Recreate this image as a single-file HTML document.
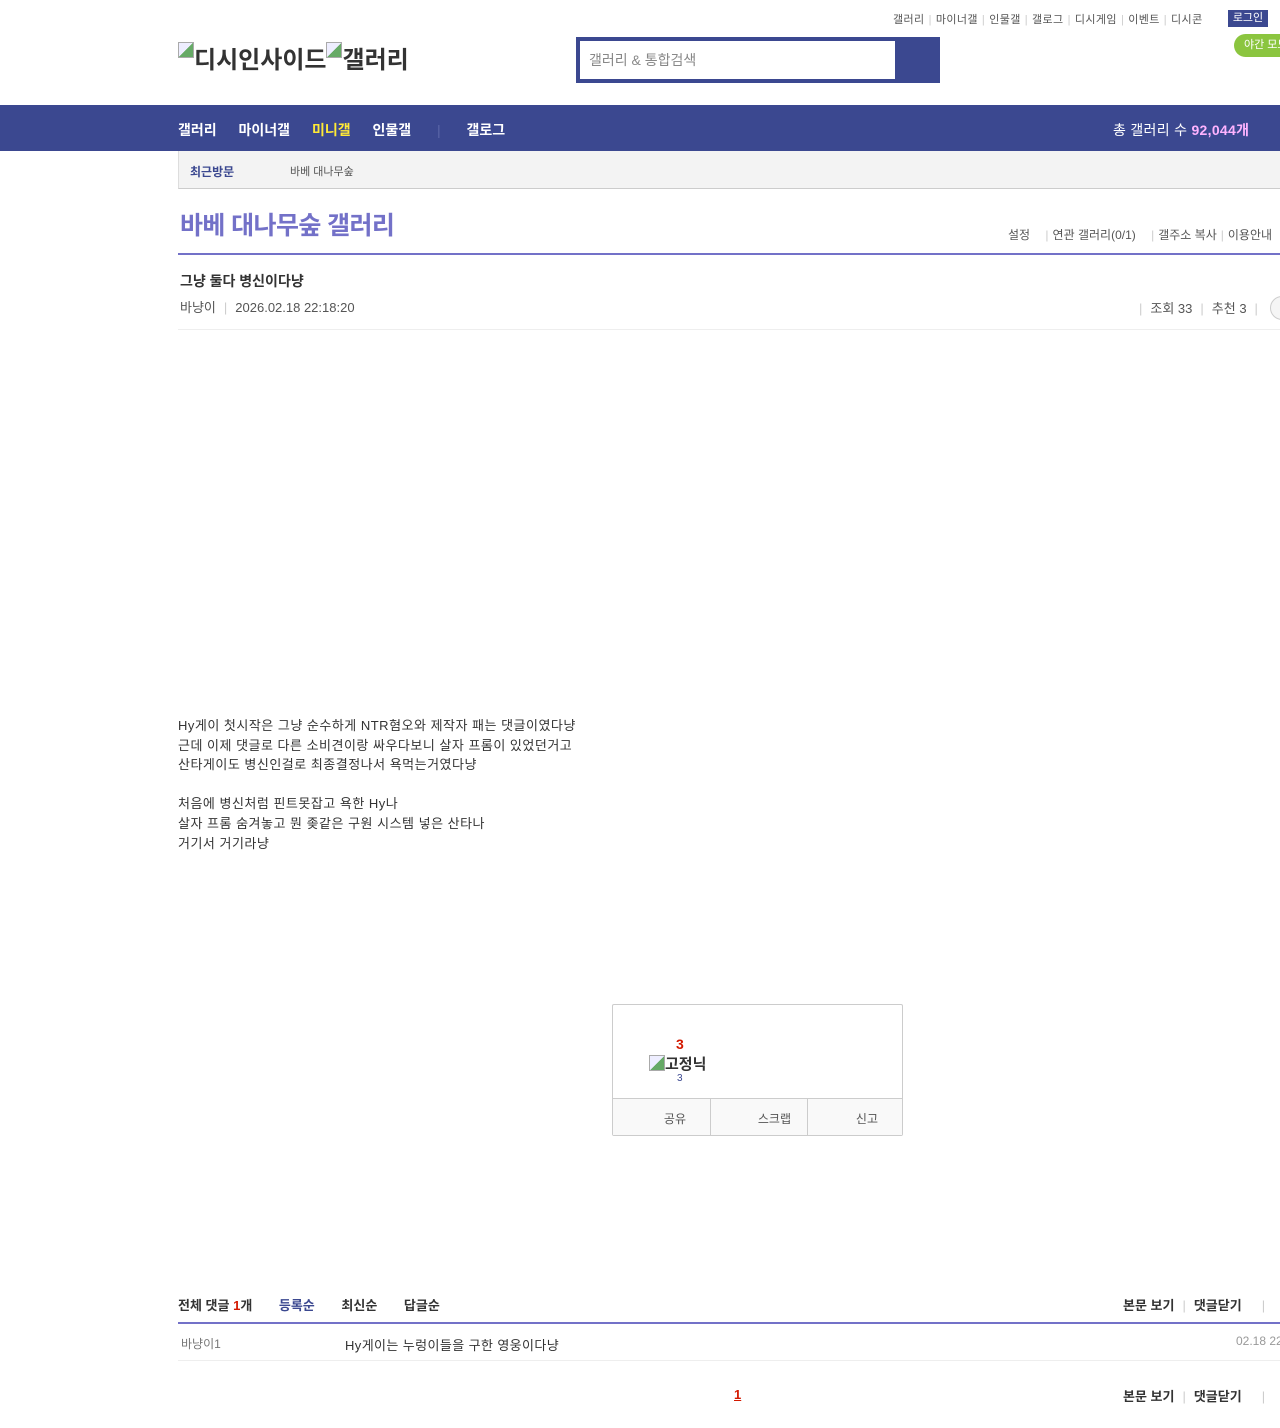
<!DOCTYPE html>
<html><head><meta charset="utf-8"><style>
*{margin:0;padding:0;box-sizing:border-box}
body{width:1280px;height:1428px;overflow:hidden;background:#fff;font-family:"Liberation Sans","Noto Sans CJK KR",sans-serif;color:#333;position:relative}
.a{position:absolute;white-space:nowrap}
.sep{color:#ccc;margin:0 4px}
.ic{display:inline-block;width:16px;height:16px;border:1px solid #aaa;background:linear-gradient(135deg,#eef 50%,#6a6 50%);vertical-align:top;margin-top:2px}
</style></head><body>
<div class="a" style="top:11px;left:893px;font-size:11px;color:#555;letter-spacing:0.4px">갤러리<span class="sep">|</span>마이너갤<span class="sep">|</span>인물갤<span class="sep">|</span>갤로그<span class="sep">|</span>디시게임<span class="sep">|</span>이벤트<span class="sep">|</span>디시콘</div>
<div class="a" style="top:10px;left:1228px;width:40px;height:17px;background:#3b4890;color:#fff;font-size:11px;line-height:17px;text-align:center">로그인</div>
<div class="a" style="top:34px;left:1234px;width:60px;height:23px;background:#8bc53f;border-radius:12px;color:#fff;font-size:11px;line-height:23px;padding-left:10px">야간 모드</div>
<div class="a" style="top:40px;left:178px;font-size:24px;font-weight:bold;color:#333"><span class="ic"></span>디시인사이드<span class="ic"></span>갤러리</div>
<div class="a" style="top:37px;left:576px;width:364px;height:46px;background:#3b4890"></div>
<div class="a" style="top:41px;left:580px;width:315px;height:38px;background:#fff;font-size:14px;color:#888;line-height:38px;padding-left:9px">갤러리 &amp; 통합검색</div>
<div class="a" style="top:105px;left:0;width:1280px;height:46px;background:#3b4890"></div>
<div class="a" style="top:120px;left:178px;font-size:14px;font-weight:bold;color:#fff">갤러리 <span style="margin-left:18px">마이너갤</span> <span style="margin-left:18px;color:#ffea36">미니갤</span> <span style="margin-left:18px">인물갤</span> <span style="margin:0 22px;color:#5b67a8;font-weight:normal">|</span> 갤로그</div>
<div class="a" style="top:120px;left:1113px;font-size:14px;color:#fff;letter-spacing:0.3px">총 갤러리 수 <b style="color:#ffb3ff">92,044개</b></div>
<div class="a" style="top:151px;left:178px;width:1102px;height:38px;background:#f3f3f3;border-left:1px solid #ddd;border-bottom:1px solid #ccc"></div>
<div class="a" style="top:163px;left:190px;font-size:12px;color:#3b4890;font-weight:bold">최근방문</div>
<div class="a" style="top:163px;left:290px;font-size:11px;color:#555">바베 대나무숲</div>
<div class="a" style="top:206px;left:180px;font-size:25px;font-weight:bold;color:#7371c8;letter-spacing:-0.6px">바베 대나무숲 갤러리</div>
<div class="a" style="top:226px;left:1008px;font-size:12px;color:#555">설정 <span class="sep" style="margin-left:12px">|</span>연관 갤러리(0/1) <span class="sep" style="margin-left:12px">|</span>갤주소 복사<span class="sep">|</span>이용안내</div>
<div class="a" style="top:253px;left:178px;width:1102px;height:2px;background:#7371c8"></div>
<div class="a" style="top:271px;left:180px;font-size:14px;font-weight:bold;color:#333">그냥 둘다 병신이다냥</div>
<div class="a" style="top:297px;left:180px;font-size:13px;color:#555">바냥이<span class="sep" style="margin:0 8px">|</span>2026.02.18 22:18:20</div>
<div class="a" style="top:298px;left:1135px;font-size:13px;color:#555"><span class="sep" style="margin-right:8px">|</span>조회 33<span class="sep" style="margin:0 8px">|</span>추천 3<span class="sep" style="margin:0 8px">|</span></div>
<div class="a" style="top:296px;left:1270px;width:24px;height:24px;border:1px solid #ccc;border-radius:12px;background:#f5f5f5"></div>
<div class="a" style="top:329px;left:178px;width:1102px;height:1px;background:#eee"></div>
<div class="a" style="top:716px;left:178px;font-size:13px;line-height:19.6px;color:#333;letter-spacing:0.5px">Hy게이 첫시작은 그냥 순수하게 NTR혐오와 제작자 패는 댓글이였다냥<br>근데 이제 댓글로 다른 소비견이랑 싸우다보니 살자 프롬이 있었던거고<br>산타게이도 병신인걸로 최종결정나서 욕먹는거였다냥<br><br>처음에 병신처럼 핀트못잡고 욕한 Hy나<br>살자 프롬 숨겨놓고 뭔 좆같은 구원 시스템 넣은 산타나<br>거기서 거기라냥</div>
<div class="a" style="top:1004px;left:612px;width:291px;height:132px;border:1px solid #ccc;border-radius:2px"></div>
<div class="a" style="top:1036px;left:676px;font-size:14px;font-weight:bold;color:#d31900">3</div>
<div class="a" style="top:1053px;left:649px;font-size:15px;font-weight:bold;color:#333"><span class="ic"></span>고정닉</div>
<div class="a" style="top:1073px;left:677px;font-size:10px;color:#3b4890">3</div>
<div class="a" style="top:1098px;left:613px;width:289px;height:37px;background:#f9f9f9;border-top:1px solid #ccc;font-size:12px;color:#555;line-height:40px">
<span class="a" style="left:0;width:97px;text-align:right;padding-right:24px">공유</span>
<span class="a" style="left:97px;width:97px;border-left:1px solid #ccc;height:37px;text-align:right;padding-right:16px">스크랩</span>
<span class="a" style="left:194px;width:95px;border-left:1px solid #ccc;height:37px;text-align:right;padding-right:24px">신고</span></div>
<div class="a" style="top:1295px;left:178px;font-size:13px;font-weight:bold;color:#333">전체 댓글 <span style="color:#d31900">1</span>개 <span style="margin-left:23px;color:#3b4890">등록순</span> <span style="margin-left:23px">최신순</span> <span style="margin-left:23px">답글순</span></div>
<div class="a" style="top:1295px;left:1123px;font-size:13px;font-weight:bold;color:#333">본문 보기<span class="sep" style="margin:0 8px;font-weight:normal">|</span>댓글닫기<span class="sep" style="margin-left:20px;font-weight:normal">|</span></div>
<div class="a" style="top:1322px;left:178px;width:1102px;height:2px;background:#7371c8"></div>
<div class="a" style="top:1335px;left:181px;font-size:12px;color:#777">바냥이1</div>
<div class="a" style="top:1335px;left:345px;font-size:13px;color:#333;letter-spacing:0.4px">Hy게이는 누렁이들을 구한 영웅이다냥</div>
<div class="a" style="top:1334px;left:1236px;font-size:12px;color:#999">02.18 22:30:11</div>
<div class="a" style="top:1360px;left:178px;width:1102px;height:1px;background:#eee"></div>
<div class="a" style="top:1387px;left:734px;font-size:13px;font-weight:bold;color:#d31900;text-decoration:underline">1</div>
<div class="a" style="top:1386px;left:1123px;font-size:13px;font-weight:bold;color:#333">본문 보기<span class="sep" style="margin:0 8px;font-weight:normal">|</span>댓글닫기<span class="sep" style="margin-left:20px;font-weight:normal">|</span></div>
</body></html>
